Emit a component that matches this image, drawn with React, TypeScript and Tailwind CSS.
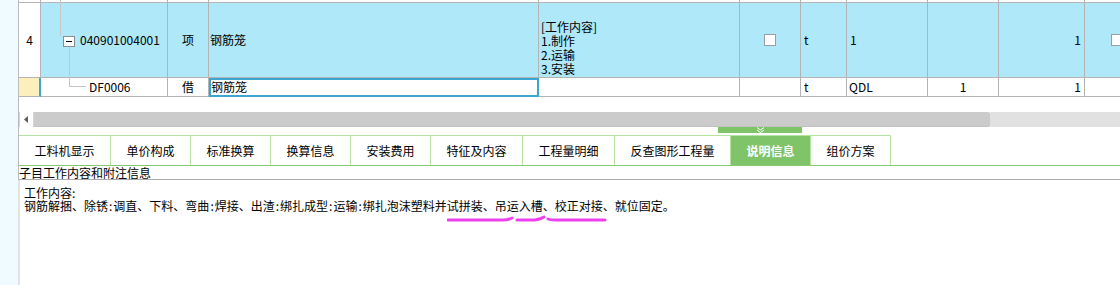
import React from "react";

const grid =
  "grid grid-cols-[22px_127px_41px_330px_201px_61px_46px_81px_71px_86px_1fr]";
const cell = "border-r border-b border-[#b4b4b4] flex items-center min-w-0";
const blue = "bg-[#aee8f9]";

function CheckBox() {
  return <span className="block w-[12px] h-[12px] shrink-0 bg-white border border-[#9c9c9c]" />;
}

function Colon() {
  return <span className="mx-[1px]">:</span>;
}

const tabs = [
  { label: "工料机显示", w: "w-[92px]" },
  { label: "单价构成", w: "w-[80px]" },
  { label: "标准换算", w: "w-[80px]" },
  { label: "换算信息", w: "w-[80px]" },
  { label: "安装费用", w: "w-[80px]" },
  { label: "特征及内容", w: "w-[92px]" },
  { label: "工程量明细", w: "w-[92px]" },
  { label: "反查图形工程量", w: "w-[116px]" },
  { label: "说明信息", w: "w-[80px]", active: true },
  { label: "组价方案", w: "w-[80px]" },
];

export default function App() {
  return (
    <div className="flex w-[1120px] h-[285px] overflow-hidden bg-white text-black text-[12px] font-['Noto_Sans_CJK_SC',sans-serif]">
      {/* left strip */}
      <div className="w-[18px] shrink-0 bg-[#effbfe]" />

      <div className="flex-1 flex flex-col min-w-0">
        {/* grid */}
        <div className="border-l border-[#bcbcbc]">
          <div className={grid}>
            {/* partial row above */}
            {Array.from({ length: 11 }).map((_, i) => (
              <div key={i} className={`${cell} h-[3px] ${i === 10 ? "border-r-0" : ""}`} />
            ))}

            {/* row 4 */}
            <div className={`${cell} h-[75px] justify-center bg-white`}>4</div>
            <div className={`${cell} ${blue} relative pl-[39px]`}>
              <span className="absolute left-[19px] top-[-3px] h-[36px] w-px bg-[#c6c6c6]" />
              <span className="absolute left-[22px] top-[33px] w-[12px] h-[11px] bg-white border border-[#8c8c8c] flex items-center justify-center">
                <span className="block w-[6px] h-px bg-black" />
              </span>
              <span className="absolute left-[28px] top-[44px] h-[40px] w-px bg-[#c6c6c6]" />
              <span className="absolute left-[28px] top-[83px] h-px w-[17px] bg-[#c6c6c6]" />
              040901004001
            </div>
            <div className={`${cell} ${blue} justify-center`}>项</div>
            <div className={`${cell} ${blue} pl-[1px]`}>钢筋笼</div>
            <div className={`${cell} ${blue} pl-[2px] items-end`}>
              <div className="leading-[14px] pb-[1px]">
                <div>[工作内容]</div>
                <div>1.制作</div>
                <div>2.运输</div>
                <div>3.安装</div>
              </div>
            </div>
            <div className={`${cell} ${blue} justify-center pb-[1px]`}>
              <CheckBox />
            </div>
            <div className={`${cell} ${blue} pl-[3px]`}>t</div>
            <div className={`${cell} ${blue} pl-[3px]`}>1</div>
            <div className={`${cell} ${blue}`} />
            <div className={`${cell} ${blue} justify-end pr-[3px]`}>1</div>
            <div className={`${cell} ${blue} border-r-0 pl-[26px] pb-[1px] overflow-hidden`}>
              <CheckBox />
            </div>

            {/* row DF0006 */}
            <div className="h-[19px] border-b border-[#b4b4b4] border-r-2 border-r-[#3aa6d2] bg-[#fdeebb]" />
            <div className={`${cell} pl-[48px]`}>DF0006</div>
            <div className={`${cell} justify-center`}>借</div>
            <div className={`${cell} pl-[2px] outline-2 -outline-offset-2 outline-[#3aa6d2]`}>钢筋笼</div>
            <div className={cell} />
            <div className={cell} />
            <div className={`${cell} pl-[3px]`}>t</div>
            <div className={`${cell} pl-[2px]`}>QDL</div>
            <div className={`${cell} justify-center`}>1</div>
            <div className={`${cell} justify-end pr-[3px]`}>1</div>
            <div className={`${cell} border-r-0`} />
          </div>
          <div className="h-[15px]" />

          {/* horizontal scrollbar */}
          <div className="flex h-[15px]">
            <div className="w-[15px] shrink-0 bg-white border-x border-[#d4d4d4] flex items-center pl-[4px]">
              <svg width="4" height="7" viewBox="0 0 4 7">
                <path d="M4 0 L0 3.5 L4 7 Z" fill="#5a5a5a" />
              </svg>
            </div>
            <div className="w-[956px] shrink-0 bg-[#cbcbcb] rounded-r-[2px] border-b border-[#c2c2c2]" />
            <div className="flex-1 bg-[#e1e1e1]" />
          </div>

          {/* splitter handle */}
          <div className="flex h-[8px]">
            <div className="ml-[699px] w-[84px] h-[6px] bg-[#80c46a] flex justify-center">
              <svg width="9" height="6" viewBox="0 0 9 6">
                <path d="M1 0.5 L4.5 3 L8 0.5 M1 3 L4.5 5.5 L8 3" stroke="#ffffff" strokeWidth="1" fill="none" />
              </svg>
            </div>
          </div>

          {/* tabs */}
          <div className="flex h-[31px] border-b border-[#86c96f]">
            {tabs.map((t) => (
              <div
                key={t.label}
                className={`${t.w} shrink-0 h-full border-t border-r border-[#b6e3a2] flex items-center justify-center text-[12px] ${
                  t.active ? "bg-[#80c46a] text-white font-bold" : ""
                }`}
              >
                {t.label}
              </div>
            ))}
          </div>

          <div className="h-[14px] leading-[14px] border-b border-[#ababab]">子目工作内容和附注信息</div>
        </div>

        {/* description panel */}
        <div className="flex-1 border-l-2 border-[#e3e3e3] pl-[4px] pt-[6px] leading-[13px]">
          <div>工作内容:</div>
          <div className="whitespace-nowrap">
            钢筋解捆、除锈<Colon />调直、下料、弯曲<Colon />焊接、出渣<Colon />绑扎成型<Colon />运输<Colon />绑扎泡沫塑料并
            <span className="relative inline-block leading-[13px]">
              试拼装、吊运入槽、校正对接
              <svg
                className="absolute left-0 top-[16px]"
                width="162"
                height="8"
                viewBox="0 0 162 8"
                fill="none"
                stroke="#ee40ee"
                strokeWidth="3"
                strokeLinecap="round"
              >
                <path d="M1 5 L56 5 Q61 5 65 3" />
                <path d="M70 5 L88 5 Q94 4 97 2" />
                <path d="M101 4 Q103 5 108 5 L158 5" />
              </svg>
            </span>
            、就位固定。
          </div>
        </div>
      </div>
    </div>
  );
}
